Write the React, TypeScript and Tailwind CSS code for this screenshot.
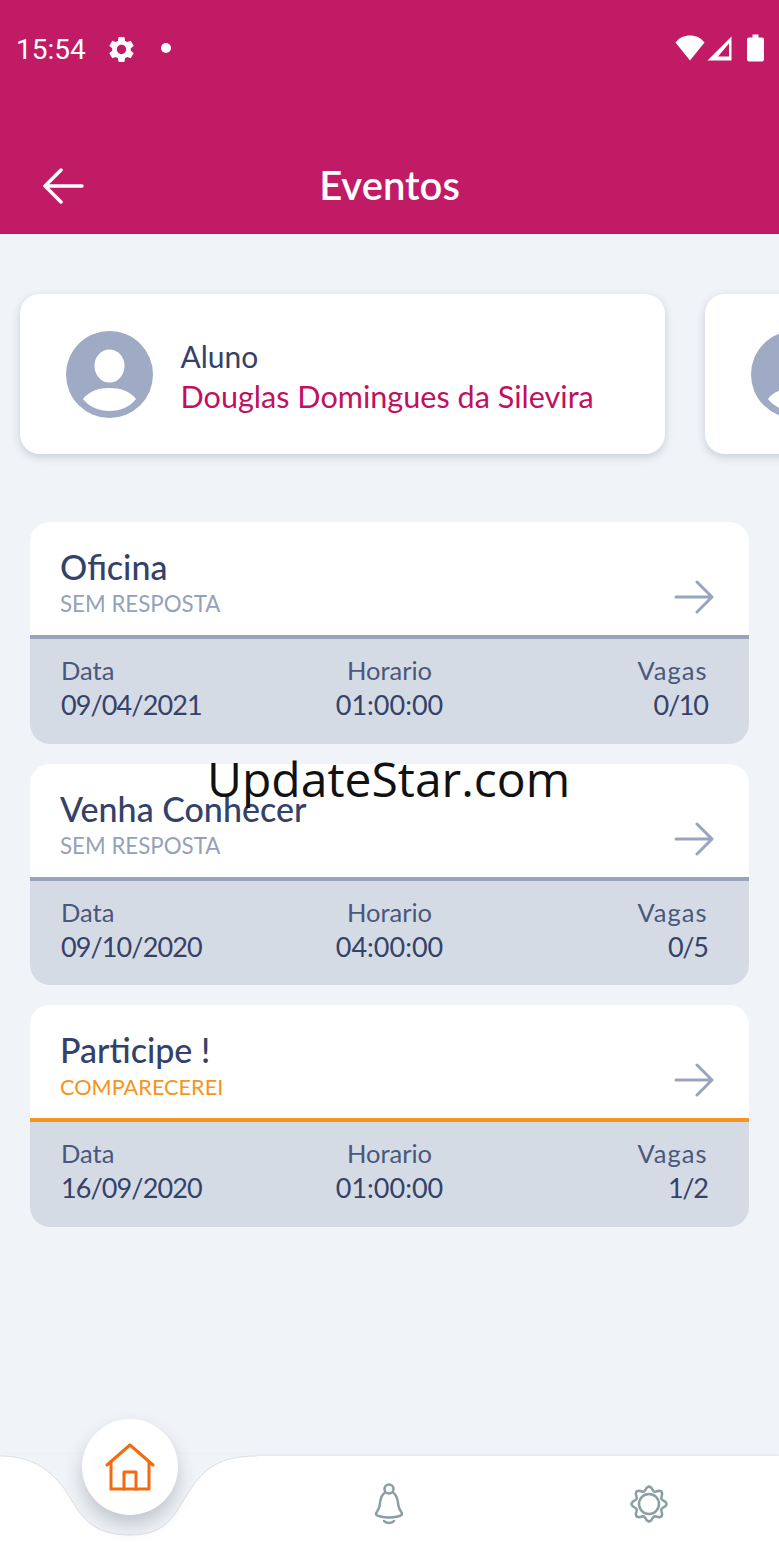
import { MdSettings } from 'react-icons/md';

const BODY_FONT = 'font-["Lato","Noto_Sans",sans-serif]';

const events = [
  { title: 'Oficina', status: 'SEM RESPOSTA', date: '09/04/2021', time: '01:00:00', spots: '0/10', confirmed: false },
  { title: 'Venha Conhecer', status: 'SEM RESPOSTA', date: '09/10/2020', time: '04:00:00', spots: '0/5', confirmed: false },
  { title: 'Participe !', status: 'COMPARECEREI', date: '16/09/2020', time: '01:00:00', spots: '1/2', confirmed: true },
];

function gearPath(cx: number, cy: number) {
  const pts: string[] = [];
  for (let i = 0; i < 48; i++) {
    const a = (i / 48) * Math.PI * 2;
    const r = 15.5 + 2.2 * Math.cos(a * 8);
    pts.push(`${(cx + r * Math.sin(a)).toFixed(2)} ${(cy - r * Math.cos(a)).toFixed(2)}`);
  }
  return `M${pts.join('L')}Z`;
}

function StatusBar() {
  return (
    <div className="flex h-[96px] items-center pl-[16px] pr-[15px] text-white">
      <span className="pt-[4px] font-['Roboto',sans-serif] text-[28px] leading-none">15:54</span>
      <MdSettings className="ml-[20px] mt-[2px] h-[31px] w-[31px]" />
      <span className="ml-[24px] h-[10px] w-[10px] rounded-full bg-white" />
      <div className="ml-auto flex items-center">
        <svg width="30" height="26" viewBox="0 0 30 26" fill="white">
          <path d="M15 25.500 0.500 7.500C4 3 9 0.500 15 0.500s11 2.500 14.500 7z" />
        </svg>
        <svg className="ml-[2px]" width="25" height="25" viewBox="0 0 25 25" fill="white">
          <path fillRule="evenodd" d="M24.500 0.500V24.500H0.500ZM22 7.500 11 20.500H22Z" />
        </svg>
        <svg className="ml-[15px]" width="17" height="28" viewBox="0 0 17 28" fill="white">
          <path d="M5.500 0.500h6v3h3.500a2 2 0 0 1 2 2V25.500a2 2 0 0 1-2 2H2a2 2 0 0 1-2-2V5.500a2 2 0 0 1 2-2h3.500z" />
        </svg>
      </div>
    </div>
  );
}

function Avatar() {
  return (
    <svg width="87" height="87" viewBox="0 0 87 87" className="shrink-0">
      <circle cx="43.500" cy="43.500" r="43.500" fill="#9fabc4" />
      <ellipse cx="43.500" cy="35" rx="15" ry="16.500" fill="white" />
      <path d="M17 68C23 60 33 57 43.500 57S64 60 70 68C64 76 54 80 43.500 80S23 76 17 68Z" fill="white" />
    </svg>
  );
}

function StudentCard({ name }: { name?: string }) {
  return (
    <div className="flex h-[160px] w-[645px] shrink-0 items-center rounded-[20px] bg-white pl-[46px] shadow-[0_3px_8px_rgba(60,70,100,0.22)]">
      <Avatar />
      {name && (
        <div className="ml-[27.500px] pt-[4px]">
          <p className="text-[30px] leading-[41px] text-[#34426a]">Aluno</p>
          <p className="text-[30.600px] leading-[40px] text-[#c2105f]">{name}</p>
        </div>
      )}
    </div>
  );
}

function EventCard({ title, status, date, time, spots, confirmed }: (typeof events)[number]) {
  return (
    <div className="flex h-[221.500px] flex-col overflow-hidden rounded-[20px] bg-white">
      <div className="relative h-[113px] shrink-0 pl-[30px] pt-[21px]">
        <p className="text-[34px] leading-[47px] font-medium text-[#34426a]">{title}</p>
        <p className={`leading-[28px] ${confirmed ? 'text-[21.700px] text-[#f7941d]' : 'text-[22.300px] text-[#94a1bd]'}`}>{status}</p>
        <svg className="absolute right-[34px] top-[58px]" width="42" height="34" viewBox="0 0 42 34" fill="none" stroke="#98a4c0" strokeWidth="3" strokeLinecap="round" strokeLinejoin="round">
          <path d="M3 17H39M24 2 39 17 24 32" />
        </svg>
      </div>
      <div className={`h-[4px] shrink-0 ${confirmed ? 'bg-[#f7941d]' : 'bg-[#98a3bc]'}`} />
      <div className="grid flex-1 grid-cols-3 bg-[#d5dbe5] px-[31px] pt-[14px] text-[#34426a]">
        <div>
          <p className="text-[25.500px] leading-[35px] text-[#4a587c]">Data</p>
          <p className="text-[27px] leading-[33px] tracking-[-0.9px]">{date}</p>
        </div>
        <div className="text-center">
          <p className="text-[25.500px] leading-[35px] text-[#4a587c]">Horario</p>
          <p className="text-[27px] leading-[33px]">{time}</p>
        </div>
        <div className="pr-[10.500px] text-right">
          <p className="text-[25.500px] leading-[35px] tracking-[1px] text-[#4a587c]">Vagas</p>
          <p className="text-[27px] leading-[33px] tracking-[-1.300px]">{spots}</p>
        </div>
      </div>
    </div>
  );
}

function BottomNav() {
  return (
    <nav className="relative h-[95px] shrink-0 bg-white shadow-[0_-1px_3px_rgba(60,70,100,0.08)]">
      <svg className="absolute left-0 top-[-2px]" width="260" height="84" viewBox="0 -2 260 84">
        <path d="M0 -2H257V0C220 0 205 12 190 34C175 56 170 79 130 79C85 79 78 52 63 31C48 12 30 0 0 0Z" fill="#f0f4f8" />
        <path d="M0 0C30 0 48 12 63 31C78 52 85 79 130 79C170 79 175 56 190 34C205 12 220 0 257 0" fill="none" stroke="#dcdfe3" strokeWidth="1" />
      </svg>
      <div className="relative grid h-full grid-cols-3">
        <div />
        <div className="flex items-center justify-center">
          <svg width="32" height="44" viewBox="0 0 32 44" fill="none" stroke="#8a9ea3" strokeWidth="2.500" strokeLinecap="round" strokeLinejoin="round">
            <circle cx="16" cy="7" r="4.500" />
            <path d="M11.500 11C7 14 7.500 19 6.500 24C5.800 28 3 30 3 32C3 34 10 35.500 16 35.500S29 34 29 32C29 30 26.200 28 25.500 24C24.500 19 25 14 20.500 11" />
            <path d="M11 39C13 41.500 19 41.500 21 39" />
          </svg>
        </div>
        <div className="flex items-center justify-center">
          <svg width="40" height="40" viewBox="0 0 40 40" fill="none" stroke="#8a9ea3" strokeWidth="2.500" strokeLinejoin="round">
            <path d={gearPath(20, 20)} />
            <circle cx="20" cy="20" r="10" />
          </svg>
        </div>
      </div>
      <div className="absolute left-[82px] top-[-37px] flex h-[96px] w-[96px] items-center justify-center rounded-full bg-white shadow-[0_10px_18px_rgba(40,50,70,0.24)]">
        <svg width="50" height="48" viewBox="0 0 50 48" fill="none" stroke="#f36a10" strokeWidth="3" strokeLinecap="round" strokeLinejoin="round">
          <path d="M2 22 25 2 48 22" />
          <path d="M6 19V46H44V19" />
          <path d="M19 46V29H31V46" />
        </svg>
      </div>
    </nav>
  );
}

export default function App() {
  return (
    <div className={`relative flex h-[1551px] w-[779px] flex-col overflow-hidden bg-[#f0f4f8] ${BODY_FONT}`}>
      <header className="h-[234px] shrink-0 bg-[#c11b65]">
        <StatusBar />
        <div className="relative mt-[60px] h-[60px] text-center">
          <svg className="absolute left-[42px] top-[12px]" width="44" height="36" viewBox="0 0 44 36" fill="none" stroke="white" strokeWidth="3.500" strokeLinecap="round" strokeLinejoin="round">
            <path d="M40 18H3M19 2 3 18 19 34" />
          </svg>
          <h1 className="pb-[2px] text-[40px] leading-[58px] font-semibold text-white">Eventos</h1>
        </div>
      </header>

      <main className="flex-1 overflow-hidden">
        <div className="flex gap-[40px] pb-[10px] pl-[20px] pt-[60px]">
          <StudentCard name="Douglas Domingues da Silevira" />
          <StudentCard />
        </div>
        <div className="mx-[30px] mt-[58px] flex flex-col gap-[20px]">
          {events.map((event) => (
            <EventCard key={event.title} {...event} />
          ))}
        </div>
      </main>

      <BottomNav />

      <span className="absolute left-[207px] top-[746px] font-['Open_Sans',sans-serif] text-[48px] leading-[66px] text-[#111]">
        UpdateStar.com
      </span>
    </div>
  );
}
